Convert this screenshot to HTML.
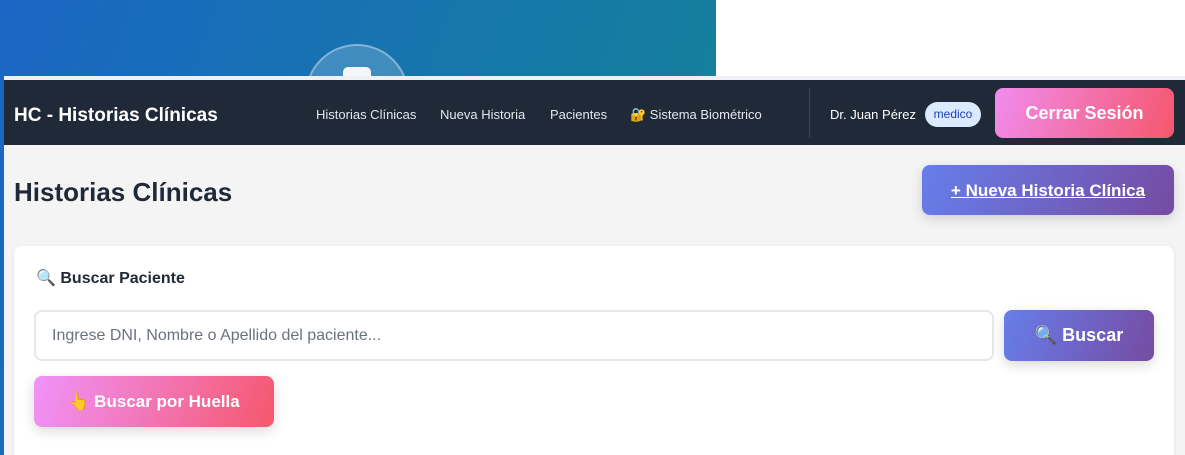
<!DOCTYPE html>
<html><head><meta charset="utf-8"><style>
*{box-sizing:border-box;margin:0;padding:0}
body{width:1185px;height:455px;overflow:hidden;background:#fff;font-family:"Liberation Sans",sans-serif;position:relative}
.bg{position:absolute;left:0;top:0;width:716px;height:455px;background:linear-gradient(110deg,#1a66c4,#148496)}
.circ{position:absolute;left:305px;top:44px;width:104px;height:104px;border-radius:50%;background:rgba(255,255,255,.18);border:2px solid rgba(255,255,255,.35)}
.sq{position:absolute;left:343px;top:67px;width:28px;height:20px;border-radius:5px;background:#f4f6fa}
.page{position:absolute;left:4px;top:76px;width:1181px;height:379px;background:#f4f4f5;border-top:4px solid #eef0f3;overflow:hidden}
nav{height:65px;background:#1f2937;color:#fff;position:relative}
.brand{position:absolute;left:10px;top:25px;font-size:19px;font-weight:bold}
.links a{position:absolute;top:27px;font-size:13px;color:#e5e7eb;text-decoration:none}
.sep{position:absolute;left:805px;top:8px;width:1px;height:50px;background:#3b4556}
.user{position:absolute;left:826px;top:27px;font-size:13px}
.badge{position:absolute;left:921px;top:22px;width:56px;height:25px;border-radius:13px;background:#dbeafe;color:#1e40af;font-size:12px;text-align:center;line-height:25px}
.out{position:absolute;left:991px;top:8px;width:179px;height:50px;border-radius:8px;background:linear-gradient(110deg,#f08cee,#f5576c);font-size:18px;font-weight:bold;text-align:center;line-height:50px}
h1{position:absolute;left:10px;top:97px;font-size:26px;color:#1f2937}
.new{position:absolute;left:918px;top:85px;width:252px;height:50px;border-radius:8px;background:linear-gradient(110deg,#667eea,#764ba2);color:#fff;font-size:17px;font-weight:bold;text-align:center;line-height:52px;text-decoration:underline;box-shadow:0 4px 12px rgba(0,0,0,.15)}
.card{position:absolute;left:10px;top:166px;width:1160px;height:209px;background:#fff;border-radius:8px 8px 0 0;box-shadow:0 1px 4px rgba(0,0,0,.08)}
.ct{position:absolute;left:22px;top:22px;font-size:16px;font-weight:bold;color:#1f2937}
.inp{position:absolute;left:20px;top:64px;width:960px;height:51px;border:2px solid #e5e7eb;border-radius:8px;font-size:16px;color:#6b7280;padding-left:16px;line-height:47px}
.bb{position:absolute;left:990px;top:64px;width:150px;height:51px;border-radius:8px;background:linear-gradient(110deg,#667eea,#764ba2);color:#fff;font-size:18px;font-weight:bold;text-align:center;line-height:51px;box-shadow:0 4px 12px rgba(0,0,0,.15)}
.hb{position:absolute;left:20px;top:130px;width:240px;height:51px;border-radius:8px;background:linear-gradient(110deg,#f093fb,#f5576c);color:#fff;font-size:17px;font-weight:bold;text-align:center;line-height:51px;box-shadow:0 4px 12px rgba(0,0,0,.15)}
</style></head><body>
<div class="bg"></div><div class="circ"></div><div class="sq"></div>
<div class="page">
<nav>
<div class="brand">HC - Historias Clínicas</div>
<div class="links"><a style="left:312px">Historias Clínicas</a><a style="left:436px">Nueva Historia</a><a style="left:546px">Pacientes</a><a style="left:626px">🔐 Sistema Biométrico</a></div>
<div class="sep"></div>
<div class="user">Dr. Juan Pérez</div>
<div class="badge">medico</div>
<div class="out">Cerrar Sesión</div>
</nav>
<h1>Historias Clínicas</h1>
<div class="new">+ Nueva Historia Clínica</div>
<div class="card">
<div class="ct">🔍 Buscar Paciente</div>
<div class="inp">Ingrese DNI, Nombre o Apellido del paciente...</div>
<div class="bb">🔍 Buscar</div>
<div class="hb">👆 Buscar por Huella</div>
</div>
</div>
</body></html>
